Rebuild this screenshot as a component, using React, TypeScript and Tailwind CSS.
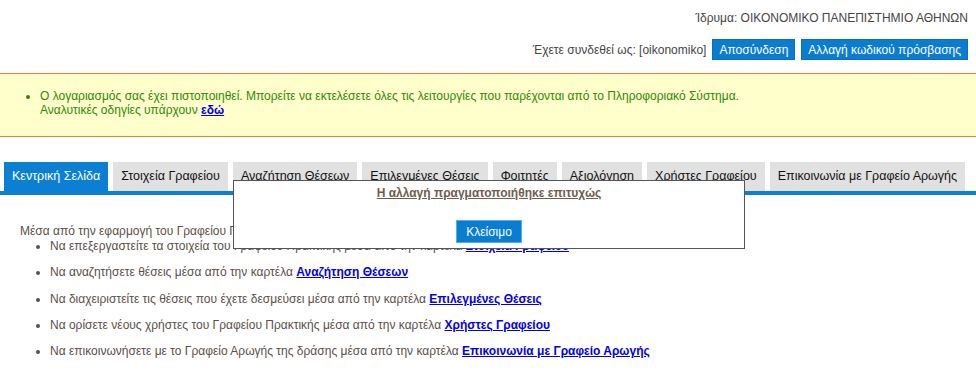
import React from "react";

// Tabs of the office portal
const tabs = [
  "Κεντρική Σελίδα",
  "Στοιχεία Γραφείου",
  "Αναζήτηση Θέσεων",
  "Επιλεγμένες Θέσεις",
  "Φοιτητές",
  "Αξιολόγηση",
  "Χρήστες Γραφείου",
  "Επικοινωνία με Γραφείο Αρωγής",
];

const items = [
  { text: "Να επεξεργαστείτε τα στοιχεία του Γραφείου Πρακτικής μέσα από την καρτέλα ", link: "Στοιχεία Γραφείου" },
  { text: "Να αναζητήσετε θέσεις μέσα από την καρτέλα ", link: "Αναζήτηση Θέσεων" },
  { text: "Να διαχειριστείτε τις θέσεις που έχετε δεσμεύσει μέσα από την καρτέλα ", link: "Επιλεγμένες Θέσεις" },
  { text: "Να ορίσετε νέους χρήστες του Γραφείου Πρακτικής μέσα από την καρτέλα ", link: "Χρήστες Γραφείου" },
  { text: "Να επικοινωνήσετε με το Γραφείο Αρωγής της δράσης μέσα από την καρτέλα ", link: "Επικοινωνία με Γραφείο Αρωγής" },
];

export default function App() {
  return (
    <div className="relative w-[976px] h-[378px] overflow-hidden bg-white text-[12px] font-['Liberation_Sans',Arial,sans-serif]">
      {/* Header */}
      <div className="flex flex-col items-end pr-[8px] pt-[11px] text-[#444]">
        <div className="leading-[14px]">Ίδρυμα: ΟΙΚΟΝΟΜΙΚΟ ΠΑΝΕΠΙΣΤΗΜΙΟ ΑΘΗΝΩΝ</div>
        <div className="flex items-center mt-[14px] gap-[6px]">
          <span>Έχετε συνδεθεί ως: [oikonomiko]</span>
          <button className="h-[21px] px-[6px] bg-[#0b7dd0] text-white border border-[#0a6fb8] leading-[18px]">Αποσύνδεση</button>
          <button className="h-[21px] px-[6px] bg-[#0b7dd0] text-white border border-[#0a6fb8] leading-[18px]">Αλλαγή κωδικού πρόσβασης</button>
        </div>
      </div>

      {/* Info message */}
      <div className="mt-[13px] h-[64px] bg-[#ffffcc] border-y border-[#e2853d] text-[#2b8a00] pt-[15px] pl-[40px]">
        <ul className="list-disc leading-[14px]">
          <li>Ο λογαριασμός σας έχει πιστοποιηθεί. Μπορείτε να εκτελέσετε όλες τις λειτουργίες που παρέχονται από το Πληροφοριακό Σύστημα.</li>
        </ul>
        <div className="leading-[14px]">
          Αναλυτικές οδηγίες υπάρχουν <a className="text-[#0000ee] font-bold underline">εδώ</a>
        </div>
      </div>

      {/* Tabs */}
      <div className="mt-[25px] border-b-[4px] border-[#0b80d2]">
        <div className="flex gap-[5px] pl-[4px] whitespace-nowrap text-[12.5px]">
          {tabs.map((t, i) => (
            <div
              key={t}
              className={`h-[29px] px-[8px] flex items-center shrink-0 ${i === 0 ? "bg-[#0b80d2] text-white" : "bg-[#e1e1e1] text-[#111]"}`}
            >
              {t}
            </div>
          ))}
        </div>
      </div>

      {/* Body */}
      <div className="pl-[20px] pt-[29px] text-[#5a4f48]">
        <div className="leading-[14px]">Μέσα από την εφαρμογή του Γραφείου Πρακτικής μπορείτε:</div>
        <ul className="list-disc pl-[30px] mt-[1px] flex flex-col gap-[12.3px] leading-[14px]">
          {items.map((it) => (
            <li key={it.link}>
              {it.text}
              <a className="text-[#0000ee] font-bold underline">{it.link}</a>
            </li>
          ))}
        </ul>
      </div>

      {/* Success dialog */}
      <div className="absolute left-[233px] top-[180px] w-[512px] h-[69px] bg-white border border-[#555] flex flex-col items-center">
        <div className="mt-[5px] font-bold underline text-[#6e5d4e] leading-[14px]">Η αλλαγή πραγματοποιήθηκε επιτυχώς</div>
        <button className="mt-[20px] w-[66px] h-[23px] bg-[#0b7dd0] text-white border border-[#4fb0f0] text-[12px]">Κλείσιμο</button>
      </div>
    </div>
  );
}
